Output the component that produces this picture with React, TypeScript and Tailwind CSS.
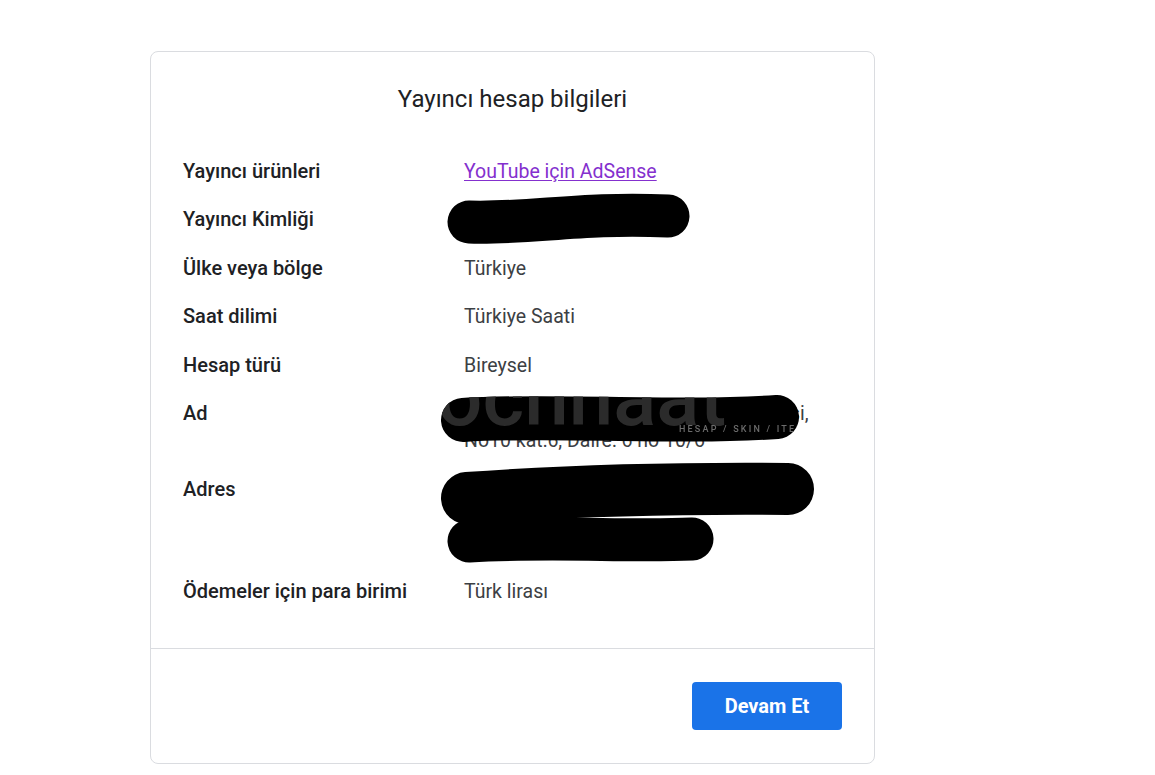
import React from "react";

function Row({ label, children }: { label: string; children: React.ReactNode }) {
  return (
    <div className="flex py-[10.75px] leading-[27px]">
      <div className="w-[281px] shrink-0 text-[20px] font-medium text-[#202124]">{label}</div>
      <div className="flex-1 text-[19.5px] text-[#3c4043]">{children}</div>
    </div>
  );
}

export default function App() {
  return (
    <div
      className="min-h-[775px] w-full bg-white"
      style={{ fontFamily: "Roboto, 'Noto Sans', sans-serif" }}
    >
      <div className="pl-[150px] pt-[51px]">
        <div className="relative w-[725px] rounded-[8px] border border-[#dadce0] bg-white">
          <div className="px-[32px] pt-[33px] pb-[32px]">
            <h1 className="text-center text-[24px] leading-[28px] font-normal text-[#202124]">
              Yayıncı hesap bilgileri
            </h1>
            <div className="mt-[34px]">
              <Row label="Yayıncı ürünleri">
                <a href="#" className="text-[#8430ce] underline underline-offset-2">
                  YouTube için AdSense
                </a>
              </Row>
              <Row label="Yayıncı Kimliği">pub-0000000000000000</Row>
              <Row label="Ülke veya bölge">Türkiye</Row>
              <Row label="Saat dilimi">Türkiye Saati</Row>
              <Row label="Hesap türü">Bireysel</Row>
              <Row label="Ad">
                <div className="flex whitespace-nowrap">
                  <span className="inline-block w-[326px] overflow-hidden">Xxxxxx Xxxxxxx Xxxxx Xxxxxxx</span>
                  <span>si,</span>
                </div>
                <div className="whitespace-nowrap">No10 kat:6, Daire: 6 no 10/6</div>
              </Row>
              <Row label="Adres">
                <div className="whitespace-nowrap">Xxxxxx Mah. Xxxxx Sk.</div>
                <div className="whitespace-nowrap">No10 kat:6</div>
                <div className="whitespace-nowrap">İstanbul</div>
              </Row>
              <Row label="Ödemeler için para birimi">Türk lirası</Row>
            </div>
          </div>
          <div className="flex justify-end border-t border-[#dadce0] px-[32px] pt-[33px] pb-[33px]">
            <button className="h-[48px] w-[150px] rounded-[4px] bg-[#1a73e8] text-[20px] font-bold text-white">
              Devam Et
            </button>
          </div>

          <svg
            className="pointer-events-none absolute left-0 top-0"
            width="725"
            height="713"
            viewBox="0 0 725 713"
          >
            <defs>
              <mask id="admask">
                <path
                  d="M312 368 C 400 362, 520 372, 626 365"
                  stroke="white"
                  strokeWidth="44"
                  strokeLinecap="round"
                  fill="none"
                />
              </mask>
            </defs>
            <path
              d="M318 170 C 380 172, 430 160, 517 164"
              stroke="black"
              strokeWidth="43"
              strokeLinecap="round"
              fill="none"
            />
            <path
              d="M312 368 C 400 362, 520 372, 626 365"
              stroke="black"
              strokeWidth="44"
              strokeLinecap="round"
              fill="none"
            />
            <g mask="url(#admask)">
              <text
                x="286"
                y="373"
                fontFamily="Roboto, sans-serif"
                fontSize="80"
                fontWeight="500"
                fill="#2b2b2b"
              >
                ocnnaat
              </text>
              <text
                x="528"
                y="380"
                fontFamily="Roboto, sans-serif"
                fontSize="9"
                fontWeight="500"
                letterSpacing="2.2"
                fill="#6b6b6b"
              >
                HESAP / SKIN / ITEM
              </text>
            </g>
            <path
              d="M316 446 C 400 440, 520 436, 637 437"
              stroke="black"
              strokeWidth="52"
              strokeLinecap="round"
              fill="none"
            />
            <path
              d="M318 489 C 400 484, 480 490, 541 487"
              stroke="black"
              strokeWidth="43"
              strokeLinecap="round"
              fill="none"
            />
          </svg>
        </div>
      </div>
    </div>
  );
}
